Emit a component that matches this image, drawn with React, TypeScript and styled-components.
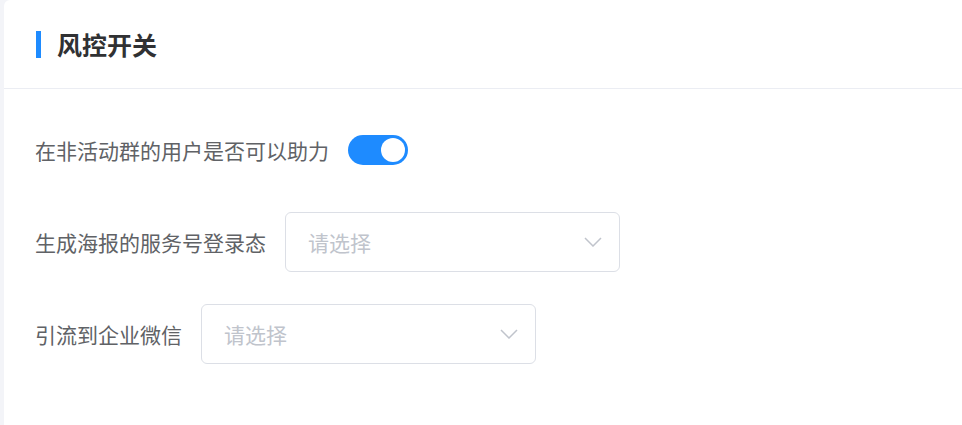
import React, { useState } from "react";
import styled, { createGlobalStyle } from "styled-components";

const GlobalStyle = createGlobalStyle`
  html, body {
    margin: 0;
    padding: 0;
    background: #f3f4f8;
  }
  body {
    font-family: "Noto Sans CJK SC", "Noto Sans", "Liberation Sans", sans-serif;
  }
  * { box-sizing: border-box; }
`;

const Page = styled.div`
  display: flex;
  height: 425px;
  overflow: hidden;
  padding-left: 4px;
`;

const Card = styled.div`
  flex: 1;
  background: #ffffff;
  border-radius: 6px 0 0 0;
  display: flex;
  flex-direction: column;
  min-height: 440px;
`;

const Header = styled.div`
  height: 89px;
  border-bottom: 1px solid #ebedf3;
  display: flex;
  align-items: center;
  padding-left: 32px;
`;

const TitleBar = styled.span`
  width: 5px;
  height: 27px;
  background: #1e8bff;
  margin-right: 16px;
`;

const Title = styled.h2`
  margin: 0;
  font-size: 25px;
  font-weight: 700;
  color: #303133;
  line-height: 1;
`;

const Form = styled.div`
  display: flex;
  flex-direction: column;
  gap: 32px;
  padding: 31px 0 0 31px;
`;

const Row = styled.div`
  display: flex;
  align-items: center;
  height: 60px;
`;

const Label = styled.label`
  font-size: 21px;
  color: #606266;
  padding-right: 19px;
  white-space: nowrap;
`;

const SwitchTrack = styled.button<{ $on: boolean }>`
  position: relative;
  width: 60px;
  height: 30px;
  border-radius: 15px;
  border: none;
  padding: 0;
  cursor: pointer;
  background: ${(p) => (p.$on ? "#1e8bff" : "#dcdfe6")};
`;

const Knob = styled.span<{ $on: boolean }>`
  position: absolute;
  top: 3px;
  left: ${(p) => (p.$on ? "33px" : "3px")};
  width: 24px;
  height: 24px;
  border-radius: 50%;
  background: #ffffff;
`;

const Select = styled.div`
  width: 335px;
  height: 60px;
  border: 1px solid #dcdfe6;
  border-radius: 6px;
  display: flex;
  align-items: center;
  justify-content: space-between;
  padding: 0 17px 0 22px;
  background: #fff;
`;

const Placeholder = styled.span`
  font-size: 21px;
  color: #c0c4cc;
`;

const Chevron = () => (
  <svg width="18" height="10" viewBox="0 0 18 10" fill="none">
    <polyline points="1,1 9,9 17,1" stroke="#c0c4cc" strokeWidth="1.5" strokeLinejoin="miter" />
  </svg>
);

export default function App() {
  const [on, setOn] = useState(true);
  return (
    <>
      <GlobalStyle />
      <Page>
        <Card>
          <Header>
            <TitleBar />
            <Title>风控开关</Title>
          </Header>
          <Form>
            <Row>
              <Label>在非活动群的用户是否可以助力</Label>
              <SwitchTrack $on={on} onClick={() => setOn(!on)}>
                <Knob $on={on} />
              </SwitchTrack>
            </Row>
            <Row>
              <Label>生成海报的服务号登录态</Label>
              <Select>
                <Placeholder>请选择</Placeholder>
                <Chevron />
              </Select>
            </Row>
            <Row>
              <Label>引流到企业微信</Label>
              <Select>
                <Placeholder>请选择</Placeholder>
                <Chevron />
              </Select>
            </Row>
          </Form>
        </Card>
      </Page>
    </>
  );
}
